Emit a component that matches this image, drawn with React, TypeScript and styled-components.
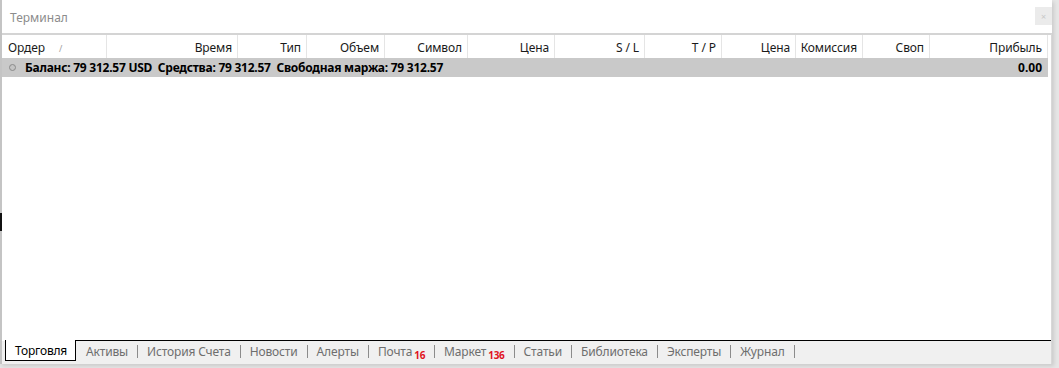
import styled, { createGlobalStyle } from 'styled-components';

const GlobalStyle = createGlobalStyle`
    html, body {
        margin: 0;
        padding: 0;
        background: #ffffff;
    }
    body {
        font-family: "Noto Sans", "Open Sans", sans-serif;
        font-size: 12px;
        color: #000;
    }
`;

const Window = styled.div`
    position: relative;
    width: 1059px;
    height: 368px;
    display: flex;
    flex-direction: column;
    background: #e6e6e6;
    overflow: hidden;
`;

const Frame = styled.div`
    width: 1052px;
    height: 364px;
    display: flex;
    flex-direction: column;
    background: #ffffff;
    border-left: 2px solid #c4c4c4;
    box-sizing: border-box;
    box-shadow: 2px 2px 4px rgba(0, 0, 0, 0.12);
`;

const TitleBar = styled.div`
    height: 33px;
    display: flex;
    align-items: center;
    justify-content: space-between;
    padding: 0 0 0 8px;
    box-sizing: border-box;
`;

const Title = styled.span`
    color: #8c8c8c;
    font-size: 12px;
    margin-top: 2px;
`;

const CloseButton = styled.div`
    width: 17px;
    height: 18px;
    margin-top: -1px;
    background: #ebebeb;
    color: #c8c8c8;
    font-size: 9px;
    display: flex;
    align-items: center;
    justify-content: center;
`;

const Panel = styled.div`
    flex: 1;
    display: flex;
    flex-direction: column;
    border-top: 2px solid #d4d4d4;
    border-right: 1px solid #d8d8d8;
    min-height: 0;
`;

const columns = '105px 131px 69px 78px 83px 87px 90px 77px 74px 67px 67px 118px';

const HeaderRow = styled.div`
    display: grid;
    grid-template-columns: ${columns};
    height: 24px;
    background: #fff;
`;

const HeaderCell = styled.div<{ $left?: boolean }>`
    display: flex;
    align-items: center;
    justify-content: ${({ $left }) => ($left ? 'flex-start' : 'flex-end')};
    padding: ${({ $left }) => ($left ? '0 0 0 6px' : '0 5px 0 0')};
    border-right: 1px solid #e5e5e5;
    white-space: nowrap;
    color: #1a1a1a;
    letter-spacing: -0.1px;
`;

const SortMark = styled.span`
    color: #a0a0a0;
    font-size: 9px;
    margin-left: 14px;
    margin-top: 2px;
`;

const BalanceRow = styled.div`
    height: 19px;
    width: 1046px;
    margin-top: -1px;
    background: #c9c9c9;
    display: flex;
    align-items: center;
    font-weight: bold;
    padding: 0 6px 0 7px;
    box-sizing: border-box;
    white-space: nowrap;
`;

const Dot = styled.span`
    width: 5px;
    height: 5px;
    border-radius: 50%;
    background: #c4c4c4;
    border: 1px solid #8a8a8a;
    margin-right: 9px;
`;

const BalanceText = styled.span`
    flex: 1;
    letter-spacing: -0.25px;
`;

const Body = styled.div`
    flex: 1;
`;

const TabBar = styled.div`
    height: 23px;
    display: flex;
    align-items: flex-start;
    background: #f0f0f0;
    padding-left: 3px;
    box-sizing: border-box;
`;

const ActiveTab = styled.div`
    height: 21px;
    padding: 0 8px 0 9px;
    background: #fff;
    border-left: 1px solid #000;
    border-right: 1px solid #000;
    border-bottom: 1px solid #000;
    box-sizing: border-box;
    display: flex;
    align-items: center;
    margin-top: -1px;
    letter-spacing: -0.2px;
`;

const TabStrip = styled.div`
    flex: 1;
    height: 21px;
    display: flex;
    align-items: center;
    border-top: 1px solid #000;
    margin-top: -1px;
    padding-left: 10px;
    color: #6e6e6e;
    box-sizing: border-box;
    letter-spacing: -0.15px;
`;

const Tab = styled.span`
    display: flex;
    align-items: center;
    white-space: nowrap;
`;

const Separator = styled.span`
    width: 1px;
    height: 13px;
    background: #8c8c8c;
    margin: 1px 9px 0 9px;
`;

const Badge = styled.sub`
    color: #e0141e;
    font-size: 10px;
    font-weight: bold;
    margin-left: 2px;
    vertical-align: baseline;
    position: relative;
    top: 4px;
    letter-spacing: -0.3px;
`;

const ResizeMark = styled.div`
    position: absolute;
    left: 0;
    top: 213px;
    width: 2px;
    height: 18px;
    background: #111;
`;

const headers = ['Время', 'Тип', 'Объем', 'Символ', 'Цена', 'S / L', 'T / P', 'Цена', 'Комиссия', 'Своп', 'Прибыль'];

const tabs: { name: string; badge?: string }[] = [
    { name: 'Активы' },
    { name: 'История Счета' },
    { name: 'Новости' },
    { name: 'Алерты' },
    { name: 'Почта', badge: '16' },
    { name: 'Маркет', badge: '136' },
    { name: 'Статьи' },
    { name: 'Библиотека' },
    { name: 'Эксперты' },
    { name: 'Журнал' },
];

export default function App() {
    return (
        <>
            <GlobalStyle />
            <Window>
                <Frame>
                    <TitleBar>
                        <Title>Терминал</Title>
                        <CloseButton>×</CloseButton>
                    </TitleBar>
                    <Panel>
                        <HeaderRow>
                            <HeaderCell $left>
                                Ордер<SortMark>/</SortMark>
                            </HeaderCell>
                            {headers.map((h, i) => (
                                <HeaderCell key={i}>{h}</HeaderCell>
                            ))}
                        </HeaderRow>
                        <BalanceRow>
                            <Dot />
                            <BalanceText>
                                Баланс: 79 312.57 USD&nbsp; Средства: 79 312.57&nbsp; Свободная маржа: 79 312.57
                            </BalanceText>
                            <span>0.00</span>
                        </BalanceRow>
                        <Body />
                        <TabBar>
                            <ActiveTab>Торговля</ActiveTab>
                            <TabStrip>
                                {tabs.map(t => (
                                    <Tab key={t.name}>
                                        {t.name}
                                        {t.badge && <Badge>{t.badge}</Badge>}
                                        <Separator />
                                    </Tab>
                                ))}
                            </TabStrip>
                        </TabBar>
                    </Panel>
                </Frame>
                <ResizeMark />
            </Window>
        </>
    );
}
